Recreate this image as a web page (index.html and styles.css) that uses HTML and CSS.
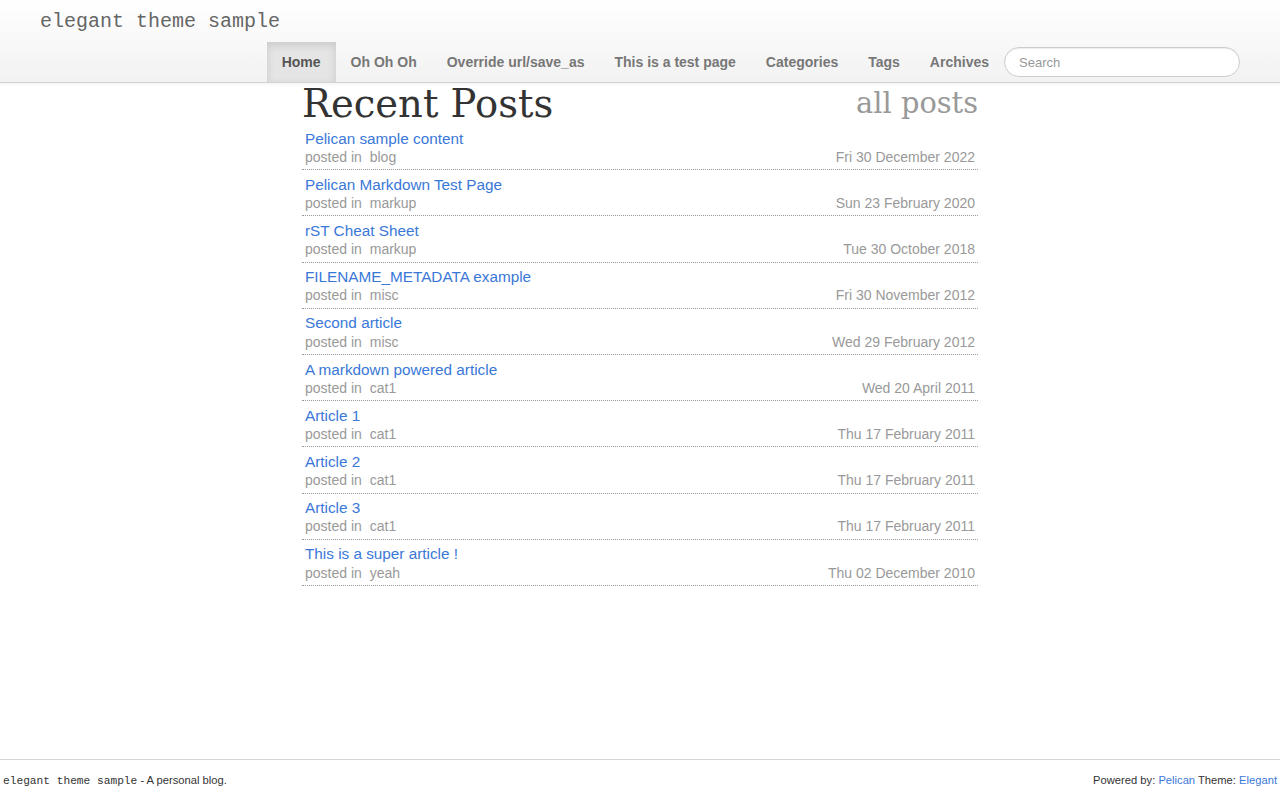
FILE: index.html
```html
<!DOCTYPE html>
<html lang="en">
<head>
<meta charset="utf-8">
<title>elegant theme sample</title>
<link rel="stylesheet" href="styles.css">
</head>
<body>
<header class="navbar">
  <div class="navbar-inner">
    <a class="brand" href="#">elegant theme sample</a>
    <nav class="nav-row">
      <ul class="nav">
        <li class="active"><a href="#">Home</a></li>
        <li><a href="#">Oh Oh Oh</a></li>
        <li><a href="#">Override url/save_as</a></li>
        <li><a href="#">This is a test page</a></li>
        <li><a href="#">Categories</a></li>
        <li><a href="#">Tags</a></li>
        <li><a href="#">Archives</a></li>
      </ul>
      <form class="search">
        <input class="search-query" type="text" placeholder="Search">
      </form>
    </nav>
  </div>
</header>

<main class="content">
  <h1 class="page-title">Recent Posts <a class="all-posts" href="#">all posts</a></h1>
  <ul class="posts">
    <li class="post">
      <a class="post-title" href="#">Pelican sample content</a>
      <div class="post-meta"><span>posted in <a href="#">blog</a></span><time>Fri 30 December 2022</time></div>
    </li>
    <li class="post">
      <a class="post-title" href="#">Pelican Markdown Test Page</a>
      <div class="post-meta"><span>posted in <a href="#">markup</a></span><time>Sun 23 February 2020</time></div>
    </li>
    <li class="post">
      <a class="post-title" href="#">rST Cheat Sheet</a>
      <div class="post-meta"><span>posted in <a href="#">markup</a></span><time>Tue 30 October 2018</time></div>
    </li>
    <li class="post">
      <a class="post-title" href="#">FILENAME_METADATA example</a>
      <div class="post-meta"><span>posted in <a href="#">misc</a></span><time>Fri 30 November 2012</time></div>
    </li>
    <li class="post">
      <a class="post-title" href="#">Second article</a>
      <div class="post-meta"><span>posted in <a href="#">misc</a></span><time>Wed 29 February 2012</time></div>
    </li>
    <li class="post">
      <a class="post-title" href="#">A markdown powered article</a>
      <div class="post-meta"><span>posted in <a href="#">cat1</a></span><time>Wed 20 April 2011</time></div>
    </li>
    <li class="post">
      <a class="post-title" href="#">Article 1</a>
      <div class="post-meta"><span>posted in <a href="#">cat1</a></span><time>Thu 17 February 2011</time></div>
    </li>
    <li class="post">
      <a class="post-title" href="#">Article 2</a>
      <div class="post-meta"><span>posted in <a href="#">cat1</a></span><time>Thu 17 February 2011</time></div>
    </li>
    <li class="post">
      <a class="post-title" href="#">Article 3</a>
      <div class="post-meta"><span>posted in <a href="#">cat1</a></span><time>Thu 17 February 2011</time></div>
    </li>
    <li class="post">
      <a class="post-title" href="#">This is a super article !</a>
      <div class="post-meta"><span>posted in <a href="#">yeah</a></span><time>Thu 02 December 2010</time></div>
    </li>
  </ul>
</main>

<footer class="footer">
  <div class="footer-left"><code>elegant theme sample</code> - A personal blog.</div>
  <div class="footer-right">Powered by: <a href="#">Pelican</a> Theme: <a href="#">Elegant</a></div>
</footer>
</body>
</html>
```

FILE: styles.css
```css
* { box-sizing: border-box; }

html, body {
  margin: 0;
  padding: 0;
}

body {
  font-family: "Liberation Sans", Arial, sans-serif;
  color: #333;
  background: #fff;
  min-height: 100vh;
  display: flex;
  flex-direction: column;
}

a { text-decoration: none; color: #3a78d8; }

/* Header */
.navbar {
  background: linear-gradient(to bottom, #ffffff, #f2f2f2);
  border-bottom: 1px solid #d4d4d4;
  box-shadow: 0 1px 4px rgba(0, 0, 0, 0.065);
}

.navbar-inner {
  padding: 0 40px;
  display: flex;
  flex-direction: column;
}

.brand {
  font-family: "Liberation Mono", "Courier New", monospace;
  font-size: 20px;
  line-height: 22px;
  padding: 11px 0 9px;
  color: #666;
  align-self: flex-start;
}

.nav-row {
  display: flex;
  justify-content: flex-end;
  align-items: flex-start;
}

.nav {
  list-style: none;
  margin: 0;
  padding: 0;
  display: flex;
}

.nav li a {
  display: block;
  padding: 10px 15px;
  line-height: 20px;
  font-size: 14px;
  font-weight: bold;
  color: #777;
}

.nav li.active a {
  color: #555;
  background: #e5e5e5;
  box-shadow: inset 0 3px 8px rgba(0, 0, 0, 0.125);
}

.search {
  margin: 5px 0 0 0;
}

.search-query {
  display: block;
  width: 236px;
  height: 30px;
  padding: 4px 14px;
  border: 1px solid #ccc;
  border-radius: 15px;
  font-family: "Liberation Sans", Arial, sans-serif;
  font-size: 13px;
  color: #555;
  background: #fff;
  box-shadow: inset 0 1px 1px rgba(0, 0, 0, 0.075);
  outline: none;
}

.search-query::placeholder { color: #999; }

/* Content */
.content {
  width: 676px;
  margin: 0 auto;
}

.page-title {
  margin: 0;
  height: 41px;
  font-family: "DejaVu Serif", serif;
  font-weight: normal;
  font-size: 38.5px;
  line-height: 41px;
  color: #333;
  display: flex;
  justify-content: space-between;
  align-items: flex-start;
}

.all-posts {
  font-size: 28.875px;
  line-height: 41px;
  color: #999;
}

.posts {
  list-style: none;
  margin: 0;
  padding: 0;
}

.post {
  padding: 4.5px 3px 3.5px 3px;
  border-bottom: 1px dotted #999;
}

.post-title {
  display: block;
  font-size: 15.3px;
  line-height: 19.2px;
}

.post-meta {
  display: flex;
  justify-content: space-between;
  font-size: 14px;
  line-height: 18px;
  color: #999;
}

.post-meta a {
  color: #999;
  margin-left: 4px;
}

/* Footer */
.footer {
  margin-top: auto;
  border-top: 1px solid #d6d6d6;
  height: 41px;
  padding: 0 3px;
  display: flex;
  justify-content: space-between;
  align-items: center;
  font-size: 11.2px;
  color: #333;
}

.footer code {
  font-family: "Liberation Mono", "Courier New", monospace;
  font-size: 11.2px;
}
```
